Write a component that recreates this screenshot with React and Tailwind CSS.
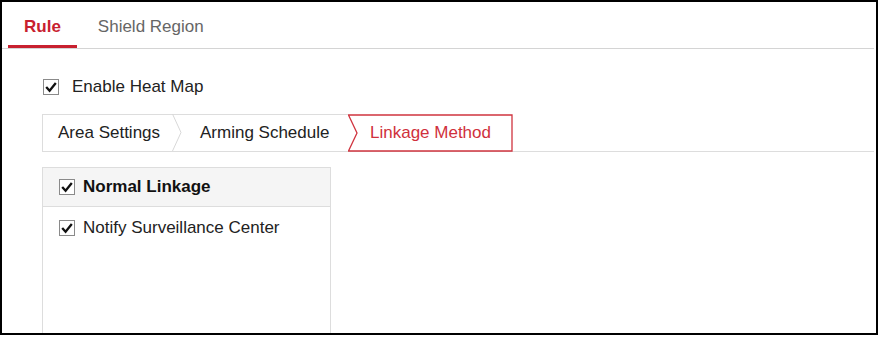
import React from "react";

const Check = () => (
    <svg width="16" height="16" viewBox="0 0 16 16" className="shrink-0">
        <rect x="0.5" y="0.5" width="15" height="15" fill="#fff" stroke="#8a8a8a" />
        <polyline points="3.2,8 6.6,11.8 12.8,4" fill="none" stroke="#111" strokeWidth="2.3" />
    </svg>
);

const App = () => {
    return (
        <div className="w-[879px] h-[345px] bg-white" style={{ fontFamily: '"Liberation Sans", Arial, sans-serif' }}>
            <div className="w-[878px] h-[335px] border-2 border-black overflow-hidden">
                {/* Tabs */}
                <div className="flex h-[47px] border-b border-[#d4d4d4] pl-[6px] mr-[2px] text-[17px]">
                    <div className="flex items-center px-4 pt-[7px] border-b-[3px] border-[#c8202f] text-[#c8202f] font-bold">
                        Rule
                    </div>
                    <div className="flex items-center px-4 pt-[7px] pb-[3px] ml-[5px] text-[#666]">
                        Shield Region
                    </div>
                </div>

                {/* Enable */}
                <div className="flex items-center h-[20px] mt-[28px] pl-[41px] gap-[13px] text-[17px] text-[#222]">
                    <Check />
                    <span>Enable Heat Map</span>
                </div>

                {/* Steps */}
                <div className="flex h-[38px] mt-[17px] ml-[40px] mr-[2px] border-b border-[#ddd] text-[17px] text-[#222]">
                    <div className="flex items-center w-[130px] pl-[15px] border-l border-t border-[#ddd]">
                        Area Settings
                    </div>
                    <svg width="10" height="37" viewBox="0 0 10 37" className="shrink-0">
                        <line x1="0" y1="0.5" x2="10" y2="0.5" stroke="#ddd" />
                        <polyline points="0.5,0 9,18.5 0.5,37" fill="none" stroke="#d8d8d8" />
                    </svg>
                    <div className="flex items-center w-[166px] pl-[18px] border-t border-[#ddd]">
                        Arming Schedule
                    </div>
                    <div className="relative flex items-center w-[165px] h-[38px] pl-[22px] text-[#d0303c]">
                        <svg className="absolute inset-0" width="165" height="38" viewBox="0 0 165 38">
                            <polygon points="0.5,1 164,1 164,37 0.5,37 9,19" fill="#fff" stroke="#d0343f" strokeWidth="1.3" />
                        </svg>
                        <span className="relative">Linkage Method</span>
                    </div>
                </div>

                {/* Panel */}
                <div className="mt-[15px] ml-[40px] w-[289px] h-[200px] border border-[#ddd] text-[17px] text-[#111]">
                    <div className="flex items-center h-[39px] bg-[#f5f5f5] border-b border-[#ddd] pl-[16px] gap-[8px] font-bold">
                        <Check />
                        <span>Normal Linkage</span>
                    </div>
                    <div className="flex items-center h-[42px] pl-[16px] gap-[8px] text-[#222]">
                        <Check />
                        <span>Notify Surveillance Center</span>
                    </div>
                </div>
            </div>
        </div>
    );
};

export default App;
